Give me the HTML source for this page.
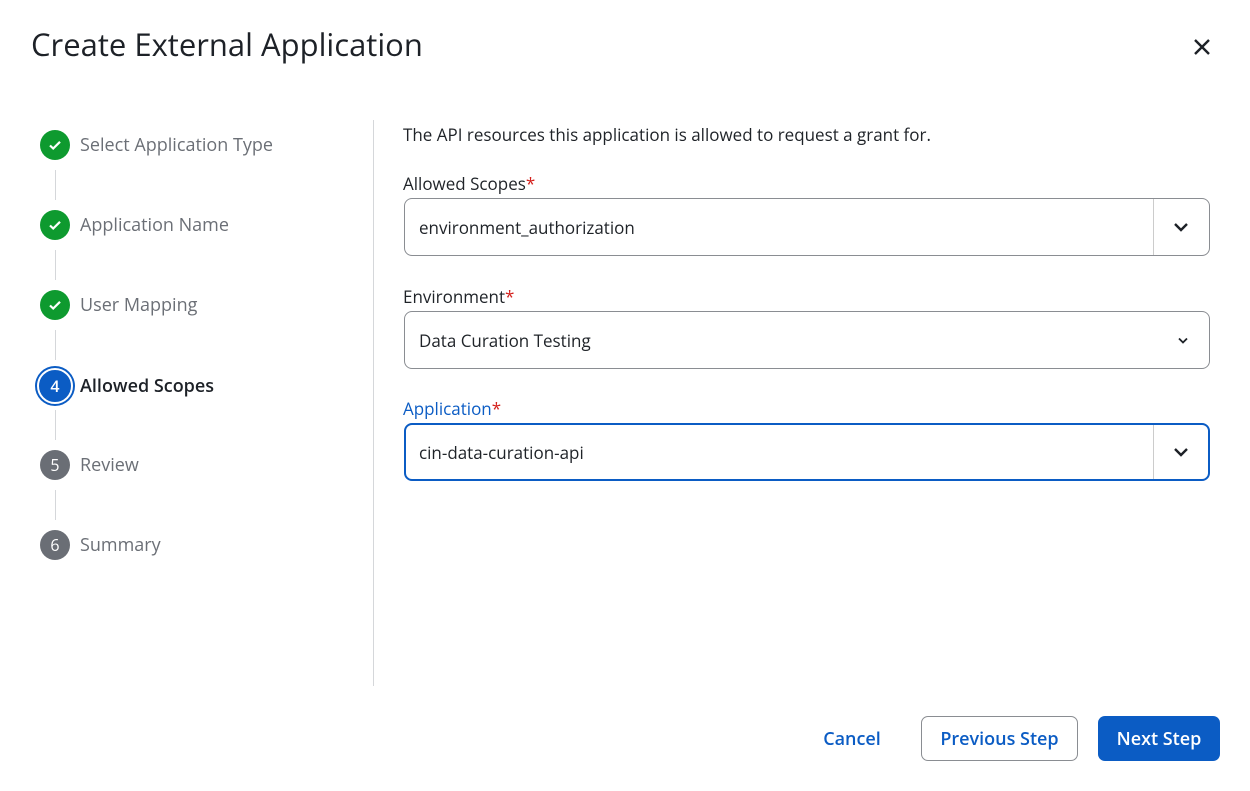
<!DOCTYPE html>
<html><head><style>
body{margin:0;width:1250px;height:791px;background:#fff;font-family:"Open Sans","Liberation Sans",sans-serif;position:relative;overflow:hidden;color:#1f2328}
.a{position:absolute}
h1{position:absolute;left:31px;top:24px;margin:0;font-weight:400;font-size:31px;color:#1d2127}
.step{position:absolute;left:40px;display:flex;align-items:center;font-size:18px;color:#6b6f76}
.c{width:30px;height:30px;border-radius:50%;margin-right:10px;display:flex;align-items:center;justify-content:center;color:#fff;font-size:16px;box-sizing:border-box}
.g{background:#0e9a2f}
.gr{background:#6a6e75}
.vl{position:absolute;left:55px;width:1px;background:#d5d7da;height:30px}
.lbl{position:absolute;left:403px;font-size:17px;color:#1f2328}
.lbl span{color:#d4201c}
.box{position:absolute;left:404px;width:806px;height:58px;box-sizing:border-box;border:1px solid #8a8d92;border-radius:8px;font-size:17px;padding-left:14px;display:flex;align-items:center}
.sep{position:absolute;right:55px;top:0;bottom:0;width:1px;background:#ccc}
.btn{position:absolute;top:716px;height:45px;border-radius:7px;font-size:18px;font-weight:600;display:flex;align-items:center;justify-content:center;box-sizing:border-box}
</style></head><body>
<h1>Create External Application</h1>
<svg class="a" style="left:1193px;top:38px" width="18" height="18" viewBox="0 0 18 18"><path d="M2 2L16 16M16 2L2 16" stroke="#1d2127" stroke-width="2.4"/></svg>
<div class="a" style="left:373px;top:120px;width:1px;height:566px;background:#d5d7da"></div>
<div class="step" style="top:130px"><div class="c g"><svg width="16" height="16" viewBox="0 0 16 16"><path d="M3 8.5l3.2 3L13 4.8" stroke="#fff" stroke-width="2.2" fill="none"/></svg></div>Select Application Type</div>
<div class="vl" style="top:170px"></div>
<div class="step" style="top:210px"><div class="c g"><svg width="16" height="16" viewBox="0 0 16 16"><path d="M3 8.5l3.2 3L13 4.8" stroke="#fff" stroke-width="2.2" fill="none"/></svg></div>Application Name</div>
<div class="vl" style="top:250px"></div>
<div class="step" style="top:290px"><div class="c g"><svg width="16" height="16" viewBox="0 0 16 16"><path d="M3 8.5l3.2 3L13 4.8" stroke="#fff" stroke-width="2.2" fill="none"/></svg></div>User Mapping</div>
<div class="vl" style="top:330px"></div>
<div class="step" style="top:368px;left:37px;color:#1d2127;font-weight:600"><div class="c" style="width:36px;height:36px;background:#0b5cc4;border:2px solid #fff;box-shadow:0 0 0 2px #0b5cc4;margin-right:7px">4</div>Allowed Scopes</div>
<div class="vl" style="top:410px"></div>
<div class="step" style="top:450px"><div class="c gr">5</div>Review</div>
<div class="vl" style="top:490px"></div>
<div class="step" style="top:530px"><div class="c gr">6</div>Summary</div>
<div class="a" style="left:403px;top:123px;font-size:17px">The API resources this application is allowed to request a grant for.</div>
<div class="lbl" style="top:172px">Allowed Scopes<span>*</span></div>
<div class="box" style="top:198px">environment_authorization<div class="sep"></div><svg class="a" style="right:20px;top:22px" width="16" height="12" viewBox="0 0 16 12"><path d="M2 3l6 6 6-6" stroke="#1d2127" stroke-width="2.4" fill="none"/></svg></div>
<div class="lbl" style="top:285px">Environment<span>*</span></div>
<div class="box" style="top:311px">Data Curation Testing<svg class="a" style="right:20px;top:24px" width="12" height="9" viewBox="0 0 12 9"><path d="M2 2.5l4 4 4-4" stroke="#1d2127" stroke-width="1.8" fill="none"/></svg></div>
<div class="lbl" style="top:397px;color:#0b5cc4">Application<span>*</span></div>
<div class="box" style="top:423px;border:2px solid #0b5cc4;padding-left:13px">cin-data-curation-api<div class="sep" style="right:54px"></div><svg class="a" style="right:19px;top:21px" width="16" height="12" viewBox="0 0 16 12"><path d="M2 3l6 6 6-6" stroke="#1d2127" stroke-width="2.4" fill="none"/></svg></div>
<div class="btn" style="left:812px;width:80px;color:#0b5cc4">Cancel</div>
<div class="btn" style="left:921px;width:157px;border:1px solid #8a8d92;color:#0b5cc4">Previous Step</div>
<div class="btn" style="left:1098px;width:122px;background:#0b5cc4;color:#fff">Next Step</div>
</body></html>
